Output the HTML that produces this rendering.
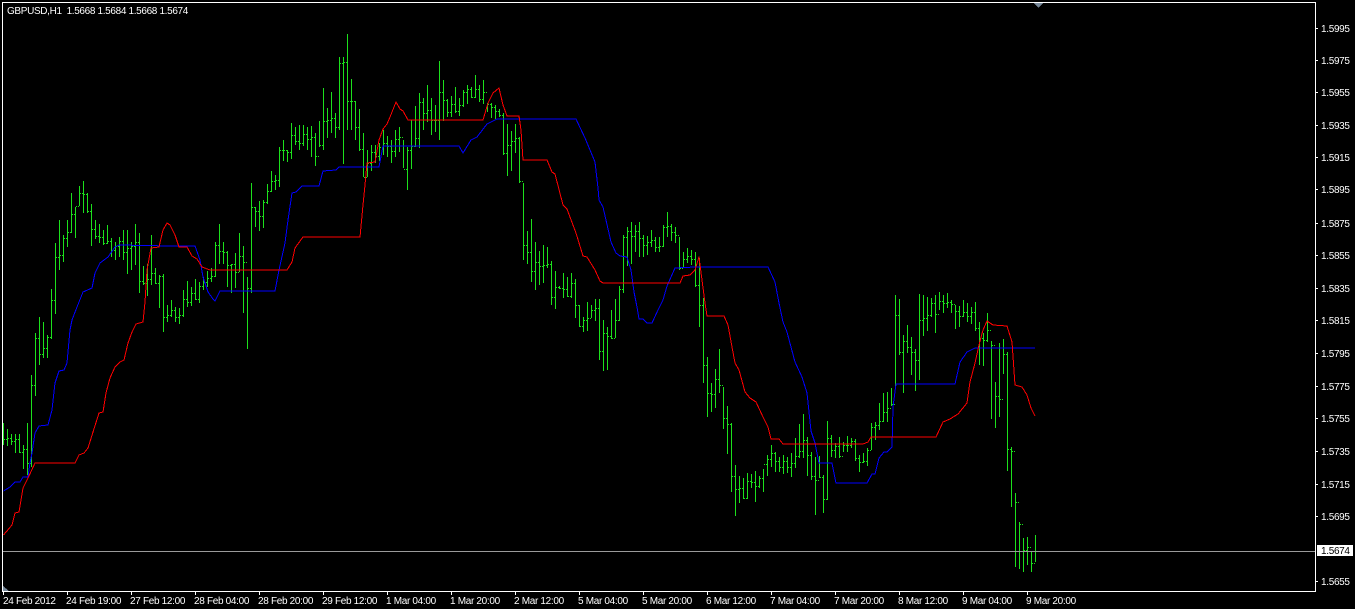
<!DOCTYPE html>
<html lang="en">
<head>
<meta charset="utf-8">
<title>GBPUSD,H1</title>
<style>
html,body{margin:0;padding:0;background:#000;width:1355px;height:609px;overflow:hidden}
svg{display:block;position:absolute;left:0;top:0}
text{font-family:"Liberation Sans",sans-serif;font-size:10px;fill:#fff;letter-spacing:-.32px}
</style>
</head>
<body>
<svg width="1355" height="609" viewBox="0 0 1355 609" xmlns="http://www.w3.org/2000/svg">
<rect width="1355" height="609" fill="#000"/>
<g shape-rendering="crispEdges" fill="none">
<path transform="translate(.5 0)" stroke="#1ce01c" d="M3 423V445M7 429V446M11 434V445M15 434V453M19 434V453M23 445V469M27 423V475M31 375V467M35 333V396M39 317V365M43 322V358M47 335V358M51 289V339M55 243V314M59 220V270M63 235V262M67 220V247M71 193V233M75 207V238M79 186V206M83 181V213M87 193V213M91 204V246M95 220V239M99 224V243M103 230V245M107 225V244M111 238V257M115 242V260M119 237V257M123 230V260M127 230V274M131 242V270M135 224V265M139 233V293M143 266V285M147 264V296M151 235V285M155 268V284M159 275V308M163 274V332M167 305V322M171 300V317M175 307V322M179 308V324M183 290V317M187 281V307M191 287V306M195 279V300M199 282V303M203 277V290M207 271V287M211 268V282M215 242V277M219 224V264M223 242V264M227 251V287M231 264V293M235 253V288M239 233V272M243 246V313M247 277V349M251 183V293M255 207V227M259 201V231M263 200V228M267 184V204M271 171V192M275 175V190M279 147V187M283 140V161M287 150V162M291 123V159M295 127V145M299 125V150M303 125V146M307 127V150M311 126V157M315 133V166M319 121V147M323 88V150M327 108V138M331 92V133M335 113V138M339 57V130M343 57V164M347 34V130M351 79V130M355 101V140M359 109V151M363 133V177M367 150V177M371 145V171M375 145V163M379 143V161M383 130V155M387 136V157M391 140V163M395 130V157M399 127V152M403 140V168M407 147V190M411 120V169M415 106V147M419 93V148M423 98V130M427 85V122M431 98V135M435 105V132M439 61V140M443 80V121M447 99V117M451 96V117M455 87V113M459 98V116M463 90V107M467 85V104M471 87V98M475 75V98M479 85V102M483 80V104M487 103V112M491 103V118M495 105V119M499 109V117M503 113V155M507 124V176M511 131V171M515 124V153M519 137V183M523 183V260M527 231V264M531 219V282M535 242V290M539 251V285M543 245V283M547 247V268M551 261V305M555 271V309M559 286V289M563 273V298M567 277V297M571 273V298M575 279V318M579 305V327M583 317V332M587 302V331M591 305V318M595 299V321M599 299V360M603 320V371M607 327V370M611 310V339M615 299V338M619 286V321M623 235V293M627 227V266M631 222V264M635 225V252M639 222V257M643 235V257M647 236V255M651 230V247M655 237V252M659 237V252M663 225V247M667 212V237M671 224V241M675 227V243M679 237V270M683 252V268M687 248V263M691 250V265M695 252V287M699 258V327M703 298V383M707 357V417M711 383V412M715 369V408M719 349V393M723 387V429M727 406V454M731 423V492M735 465V516M739 476V503M743 478V499M747 473V499M751 474V488M755 471V502M759 476V488M763 469V492M767 455V476M771 445V467M775 452V472M779 457V472M783 455V474M787 457V473M791 453V477M795 438V468M799 424V458M803 414V458M807 437V476M811 452V480M815 457V515M819 456V478M823 475V513M827 421V500M831 435V457M835 443V458M839 437V458M843 442V452M847 436V452M851 438V448M855 439V461M859 455V472M863 453V463M867 448V466M871 423V450M875 422V440M879 403V430M883 393V422M887 392V422M891 388V406M895 295V387M899 299V355M903 335V393M907 325V353M911 337V375M915 349V391M919 294V380M923 295V336M927 297V331M931 298V317M935 295V333M939 292V310M943 295V313M947 293V308M951 300V313M955 305V329M959 306V327M963 300V317M967 303V322M971 307V324M975 302V331M979 322V365M983 333V366M987 313V342M991 341V419M995 382V428M999 343V417M1003 339V374M1007 352V471M1011 447V507M1015 493V567M1019 522V569M1023 538V572M1027 537V565M1031 552V572M1035 535V562"/>
<path transform="translate(0 .5)" stroke="#1ce01c" stroke-dasharray="1 1" d="M4 439h3M8 438h3M12 441h3M16 439h3M20 452h3M24 449h3M28 463h3M32 385h3M36 338h3M40 354h3M44 348h3M48 337h3M52 300h3M56 257h3M60 255h3M64 238h3M68 232h3M72 214h3M76 206h3M80 193h3M84 194h3M88 211h3M92 229h3M96 236h3M100 237h3M104 243h3M108 241h3M112 250h3M116 246h3M120 241h3M124 252h3M128 248h3M132 246h3M136 242h3M140 281h3M144 283h3M148 279h3M152 273h3M156 283h3M160 276h3M164 317h3M168 315h3M172 310h3M176 317h3M180 315h3M184 299h3M188 302h3M192 293h3M196 299h3M200 286h3M204 282h3M208 278h3M212 276h3M216 245h3M220 251h3M224 252h3M228 265h3M232 264h3M236 272h3M240 256h3M244 262h3M248 288h3M252 207h3M256 211h3M260 216h3M264 202h3M268 191h3M272 181h3M276 180h3M280 150h3M284 150h3M288 152h3M292 135h3M296 141h3M300 143h3M304 134h3M308 139h3M312 137h3M316 156h3M320 145h3M324 121h3M328 120h3M332 118h3M336 127h3M340 63h3M344 62h3M348 101h3M352 101h3M356 127h3M360 149h3M364 177h3M368 163h3M372 152h3M376 156h3M380 147h3M384 143h3M388 146h3M392 151h3M396 139h3M400 137h3M404 169h3M408 150h3M412 146h3M416 138h3M420 102h3M424 113h3M428 110h3M432 120h3M436 120h3M440 92h3M444 100h3M448 112h3M452 104h3M456 111h3M460 105h3M464 92h3M468 89h3M472 97h3M476 89h3M480 99h3M484 92h3M488 104h3M492 107h3M496 111h3M500 115h3M504 153h3M508 145h3M512 141h3M516 138h3M520 181h3M524 245h3M528 252h3M532 271h3M536 262h3M540 266h3M544 265h3M548 264h3M552 297h3M556 287h3M560 288h3M564 289h3M568 296h3M572 283h3M576 305h3M580 326h3M584 320h3M588 318h3M592 310h3M596 308h3M600 351h3M604 333h3M608 336h3M612 338h3M616 320h3M620 289h3M624 237h3M628 231h3M632 236h3M636 231h3M640 238h3M644 245h3M648 242h3M652 240h3M656 247h3M660 246h3M664 227h3M668 226h3M672 232h3M676 235h3M680 268h3M684 259h3M688 256h3M692 259h3M696 285h3M700 305h3M704 365h3M708 393h3M712 394h3M716 379h3M720 385h3M724 418h3M728 424h3M732 476h3M736 489h3M740 488h3M744 498h3M748 481h3M752 482h3M756 486h3M760 478h3M764 464h3M768 459h3M772 453h3M776 461h3M780 467h3M784 461h3M788 467h3M792 463h3M796 456h3M800 451h3M804 440h3M808 455h3M812 476h3M816 480h3M820 477h3M824 499h3M828 438h3M832 450h3M836 446h3M840 456h3M844 445h3M848 445h3M852 441h3M856 458h3M860 462h3M864 461h3M868 450h3M872 427h3M876 425h3M880 421h3M884 412h3M888 408h3M892 404h3M896 315h3M900 352h3M904 341h3M908 347h3M912 352h3M916 360h3M920 320h3M924 318h3M928 315h3M932 303h3M936 314h3M940 301h3M944 303h3M948 302h3M952 304h3M956 311h3M960 316h3M964 312h3M968 316h3M972 312h3M976 328h3M980 338h3M984 340h3M988 330h3M992 345h3M996 396h3M1000 399h3M1004 354h3M1008 449h3M1012 451h3M1016 502h3M1020 524h3M1024 550h3M1028 547h3M1032 563h3"/>
<path stroke="#0000ff" stroke-linejoin="round" d="M3.5 491L10 487 15 482 20 482 23 477 28 477 30 463 32 453 35 433 39 426 48 425 52 410 55 383 59 371 64 370 67 363 70 330 72 320 77 307 83 292 92 288 95 273 100 263 108 257 115 247 119 245 170 246 195 246 200 260 203 277 208 292 213 299 215 301 220 291 275 291 279 270 285 243 288 220 292 193 296 192 302 186 319 186 323 171 336 170 339 167 379 167 383 146 459 146 463 153 471 140 477 137 487 124 497 119 576 119 585 138 595 162 598 188 599 200 603 207 611 242 616 253 620 256 627 257 631 270 634 292 637 307 639 319 643 319 647 323 652 323 658 310 663 300 667 286 675 268 695 267 768 267 775 282 779 303 783 322 787 332 795 362 802 377 807 393 811 431 815 443 819 463 832 463 836 483 867 483 872 474 875 474 879 458 884 452 887 452 892 447 893 407 896 384 955 384 960 362 967 352 975 348 1035 348"/>
<path stroke="#ff0000" stroke-linejoin="round" d="M3.5 535L12 525 15 513 19 512 21 500 23 488 28 478 35 463 75 463 79 455 84 453 88 448 93 432 99 413 103 412 106 393 110 378 115 367 120 362 124 360 128 343 132 332 136 324 143 322 145 302 147 270 151 248 159 247 163 230 167 223 170 225 175 235 179 247 187 247 192 256 197 259 202 267 210 270 287 270 292 262 295 248 303 237 360 237 363 205 365 185 367 163 375 162 379 140 383 129 387 124 390 117 396 102 400 109 403 111 408 120 483 120 488 103 493 93 499 88 503 105 507 116 519 116 521 130 523 160 547 160 552 172 555 174 563 205 567 209 576 233 583 256 587 257 595 270 600 281 603 283 680 283 683 276 690 275 695 270 699 257 702 280 705 303 707 316 724 316 728 325 732 347 735 363 739 370 745 392 750 398 756 402 763 417 768 427 771 439 779 439 783 444 863 444 868 442 871 437 936 437 943 422 950 419 958 414 967 403 970 382 975 363 979 345 983 330 987 321 993 325 1007 326 1012 342 1015 385 1022 387 1027 395 1031 408 1035 416"/>
<path stroke="#9a9a9a" d="M3 551.5H1315"/>
<path stroke="#fff" d="M2.5 2.5H1315.5V591.5H2.5Z"/>
<path stroke="#fff" d="M1316 28.5h2M1316 60.5h2M1316 92.5h2M1316 125.5h2M1316 157.5h2M1316 189.5h2M1316 223.5h2M1316 255.5h2M1316 288.5h2M1316 320.5h2M1316 353.5h2M1316 386.5h2M1316 418.5h2M1316 451.5h2M1316 484.5h2M1316 516.5h2M1316 581.5h2"/>
<path stroke="#fff" d="M3.5 592v3M67.5 592v3M131.5 592v3M195.5 592v3M259.5 592v3M323.5 592v3M387.5 592v3M451.5 592v3M515.5 592v3M579.5 592v3M643.5 592v3M707.5 592v3M771.5 592v3M835.5 592v3M899.5 592v3M963.5 592v3M1027.5 592v3"/>
<path fill="#778899" d="M1034 3h9l-4.500 5z"/>
<path fill="#778899" d="M3 586l6 5H3z"/>
<rect x="1317" y="545" width="36" height="11" fill="#fff"/>
</g>
<text x="7" y="14" textLength="181" lengthAdjust="spacing" xml:space="preserve">GBPUSD,H1  1.5668 1.5684 1.5668 1.5674</text>
<g>
<text x="1321" y="32">1.5995</text>
<text x="1321" y="64">1.5975</text>
<text x="1321" y="96">1.5955</text>
<text x="1321" y="129">1.5935</text>
<text x="1321" y="161">1.5915</text>
<text x="1321" y="193">1.5895</text>
<text x="1321" y="227">1.5875</text>
<text x="1321" y="259">1.5855</text>
<text x="1321" y="292">1.5835</text>
<text x="1321" y="324">1.5815</text>
<text x="1321" y="357">1.5795</text>
<text x="1321" y="390">1.5775</text>
<text x="1321" y="422">1.5755</text>
<text x="1321" y="455">1.5735</text>
<text x="1321" y="488">1.5715</text>
<text x="1321" y="520">1.5695</text>
<text x="1321" y="554" style="fill:#000">1.5674</text>
<text x="1321" y="585">1.5655</text>
</g>
<g>
<text x="3" y="604">24 Feb 2012</text>
<text x="66" y="604">24 Feb 19:00</text>
<text x="130" y="604">27 Feb 12:00</text>
<text x="194" y="604">28 Feb 04:00</text>
<text x="258" y="604">28 Feb 20:00</text>
<text x="322" y="604">29 Feb 12:00</text>
<text x="386" y="604">1 Mar 04:00</text>
<text x="450" y="604">1 Mar 20:00</text>
<text x="514" y="604">2 Mar 12:00</text>
<text x="578" y="604">5 Mar 04:00</text>
<text x="642" y="604">5 Mar 20:00</text>
<text x="706" y="604">6 Mar 12:00</text>
<text x="770" y="604">7 Mar 04:00</text>
<text x="834" y="604">7 Mar 20:00</text>
<text x="898" y="604">8 Mar 12:00</text>
<text x="962" y="604">9 Mar 04:00</text>
<text x="1026" y="604">9 Mar 20:00</text>
</g>
</svg>
</body>
</html>
